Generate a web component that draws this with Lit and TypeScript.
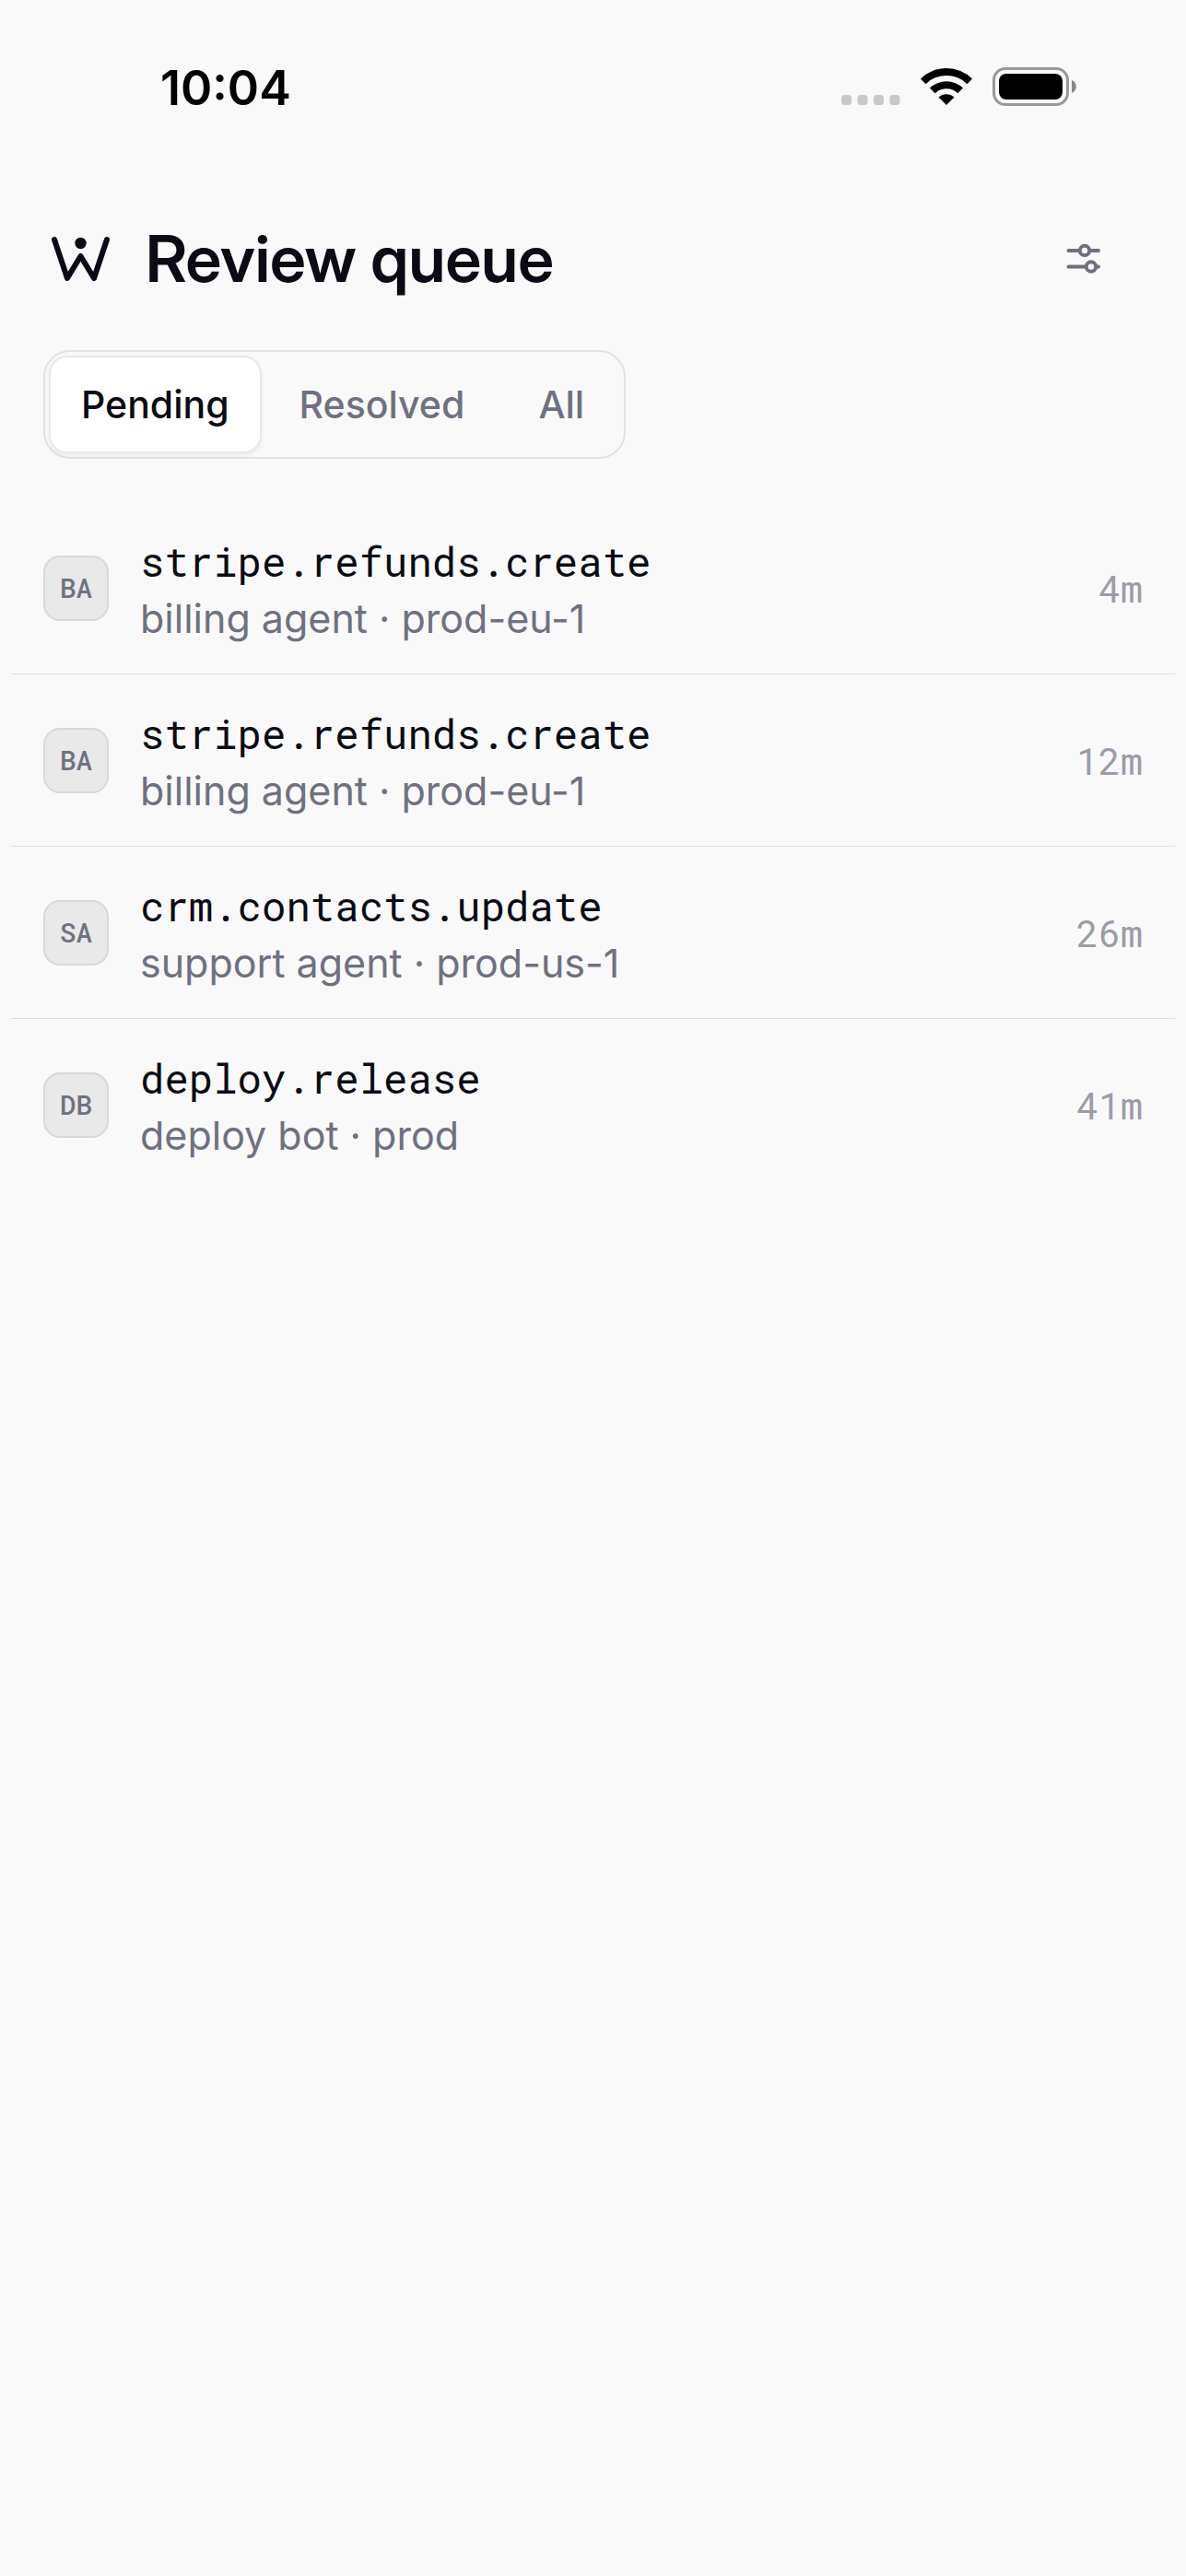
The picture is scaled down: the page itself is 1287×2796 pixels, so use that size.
import { LitElement, html, css, svg } from 'lit';
import { customElement, property, state } from 'lit/decorators.js';

interface ReviewItem {
  initials: string;
  action: string;
  source: string;
  age: string;
}

const ITEMS: ReviewItem[] = [
  { initials: 'BA', action: 'stripe.refunds.create', source: 'billing agent · prod-eu-1', age: '4m' },
  { initials: 'BA', action: 'stripe.refunds.create', source: 'billing agent · prod-eu-1', age: '12m' },
  { initials: 'SA', action: 'crm.contacts.update', source: 'support agent · prod-us-1', age: '26m' },
  { initials: 'DB', action: 'deploy.release', source: 'deploy bot · prod', age: '41m' },
];

const TABS = ['Pending', 'Resolved', 'All'];

/** Phone status bar: clock, signal, wifi and battery. */
@customElement('status-bar')
export class StatusBar extends LitElement {
  @property({ type: String }) time = '';

  static styles = css`
    :host {
      display: flex;
      align-items: center;
      justify-content: space-between;
      padding: 64px 119px 0 174px;
      color: #000;
    }

    .time {
      font-size: 52px;
      font-weight: 600;
      line-height: 64px;
    }

    .icons {
      display: flex;
      align-items: center;
      gap: 22px;
      padding-bottom: 4px;
    }

    svg {
      display: block;
    }
  `;

  render() {
    return html`
      <span class="time">${this.time}</span>
      <div class="icons">
        <svg width="64" height="42" viewBox="0 0 64 42" fill="#c8c8c8" aria-hidden="true">
          ${[0, 17.5, 35, 52.5].map((x) => svg`<rect x=${x} y="30" width="11" height="11" rx="3.5" />`)}
        </svg>
        <svg width="56" height="42" viewBox="0 0 56 42" aria-hidden="true">
          <path d="M0 12.5a40 40 0 0 1 56 0l-5.5 5.7a32 32 0 0 0-45 0Z" />
          <path d="M10 22.5a26 26 0 0 1 36 0l-5.6 5.8a18 18 0 0 0-24.8 0Z" />
          <path d="M19.5 32.5a12.5 12.5 0 0 1 17 0L28 41Z" />
        </svg>
        <svg width="91" height="42" viewBox="0 0 91 42" aria-hidden="true">
          <rect x="1.5" y="1.5" width="80" height="39" rx="12.5" fill="none" stroke="#999" stroke-width="3" />
          <rect x="7" y="7" width="69" height="28" rx="8" />
          <path d="M86 14a7.5 7.5 0 0 1 0 14Z" fill="#888" />
        </svg>
      </div>
    `;
  }
}

/** One call in the review queue. */
@customElement('review-row')
export class ReviewRow extends LitElement {
  @property({ attribute: false }) item!: ReviewItem;

  static styles = css`
    :host {
      display: block;
    }

    .row {
      display: flex;
      align-items: center;
      gap: 34px;
      padding: 29px 35px;
      color: inherit;
      text-decoration: none;
    }

    .avatar {
      display: grid;
      place-items: center;
      box-sizing: border-box;
      width: 71px;
      height: 71px;
      border: 2px solid #d8d8d9;
      border-radius: 18px;
      background: #e9e9e9;
      color: #6f7180;
      font-family: var(--mono);
      font-size: 29px;
      font-weight: 500;
    }

    .text {
      flex: 1;
      min-width: 0;
      padding-top: 4px;
      line-height: 62px;
    }

    .action {
      font-family: var(--mono);
      font-size: 44px;
      color: #0a0b14;
    }

    .source {
      font-size: 43px;
      color: #6f7180;
    }

    .age {
      font-family: var(--mono);
      font-size: 40px;
      color: #9b9ca8;
    }
  `;

  render() {
    const { initials, action, source, age } = this.item;
    return html`
      <a class="row" href="#">
        <span class="avatar">${initials}</span>
        <div class="text">
          <div class="action">${action}</div>
          <div class="source">${source}</div>
        </div>
        <span class="age">${age}</span>
      </a>
    `;
  }
}

@customElement('app-root')
export class AppRoot extends LitElement {
  @state() private tab = 'Pending';

  static styles = css`
    :host {
      --mono: 'Roboto Mono', 'Liberation Mono', monospace;
      display: block;
      min-height: 100vh;
      background: #f9f9f9;
      color: #0a0b14;
      font-family: Inter, 'Liberation Sans', sans-serif;
    }

    button {
      border: 0;
      padding: 0;
      background: none;
      font: inherit;
      color: inherit;
      cursor: pointer;
    }

    header {
      display: flex;
      align-items: center;
      gap: 36px;
      padding: 107px 69px 0 52px;
    }

    svg {
      display: block;
    }

    h1 {
      flex: 1;
      margin: 0;
      font-family: 'Inter Display', Inter, 'Liberation Sans', sans-serif;
      font-size: 70px;
      font-weight: 600;
      font-variation-settings: 'opsz' 32;
      line-height: 92px;
    }

    .filter {
      display: grid;
      place-items: center;
      width: 84px;
      height: 84px;
      color: #6f7180;
    }

    .tabs {
      display: flex;
      gap: 6px;
      width: fit-content;
      margin: 53px 47px 0;
      padding: 4px;
      border: 2px solid #e2e2e3;
      border-radius: 29px;
    }

    .tab {
      min-width: 128px;
      padding: 0 33px;
      border: 2px solid transparent;
      border-radius: 20px;
      color: #6f7180;
      font-size: 41px;
      font-weight: 500;
      line-height: 102px;
    }

    .tab.selected {
      border-color: #e8e8e9;
      background: #fff;
      color: #0a0b14;
      box-shadow: 0 3px 4px rgba(0, 0, 0, 0.06);
    }

    ul {
      margin: 47px 12px 0;
      padding: 0;
      list-style: none;
    }

    li + li {
      border-top: 1px solid #dededf;
    }
  `;

  render() {
    return html`
      <status-bar time="10:04"></status-bar>
      <header>
        <svg width="70" height="70" viewBox="0 0 70 70" fill="none" aria-hidden="true">
          <path
            d="M7 14 21 56 35.5 32 50 56 64 14"
            stroke="currentColor"
            stroke-width="6"
            stroke-linecap="round"
            stroke-linejoin="round"
          />
          <circle cx="35.5" cy="18" r="6.2" fill="currentColor" />
        </svg>
        <h1>Review queue</h1>
        <button class="filter" aria-label="Filters">
          <svg width="42" height="42" viewBox="0 0 42 42" fill="none" stroke="currentColor" stroke-width="4" stroke-linecap="round">
            <path d="M4.5 12H16M28 12H37M4.5 29.5H23M35 29.5H37" />
            <circle cx="22" cy="12" r="5.2" />
            <circle cx="29" cy="29.5" r="5.2" />
          </svg>
        </button>
      </header>
      <div class="tabs" role="tablist">
        ${TABS.map(
          (name) => html`
            <button
              class="tab ${name === this.tab ? 'selected' : ''}"
              role="tab"
              aria-selected=${name === this.tab}
              @click=${() => (this.tab = name)}
            >${name}</button>
          `
        )}
      </div>
      <ul>
        ${ITEMS.map((item) => html`<li><review-row .item=${item}></review-row></li>`)}
      </ul>
    `;
  }
}
